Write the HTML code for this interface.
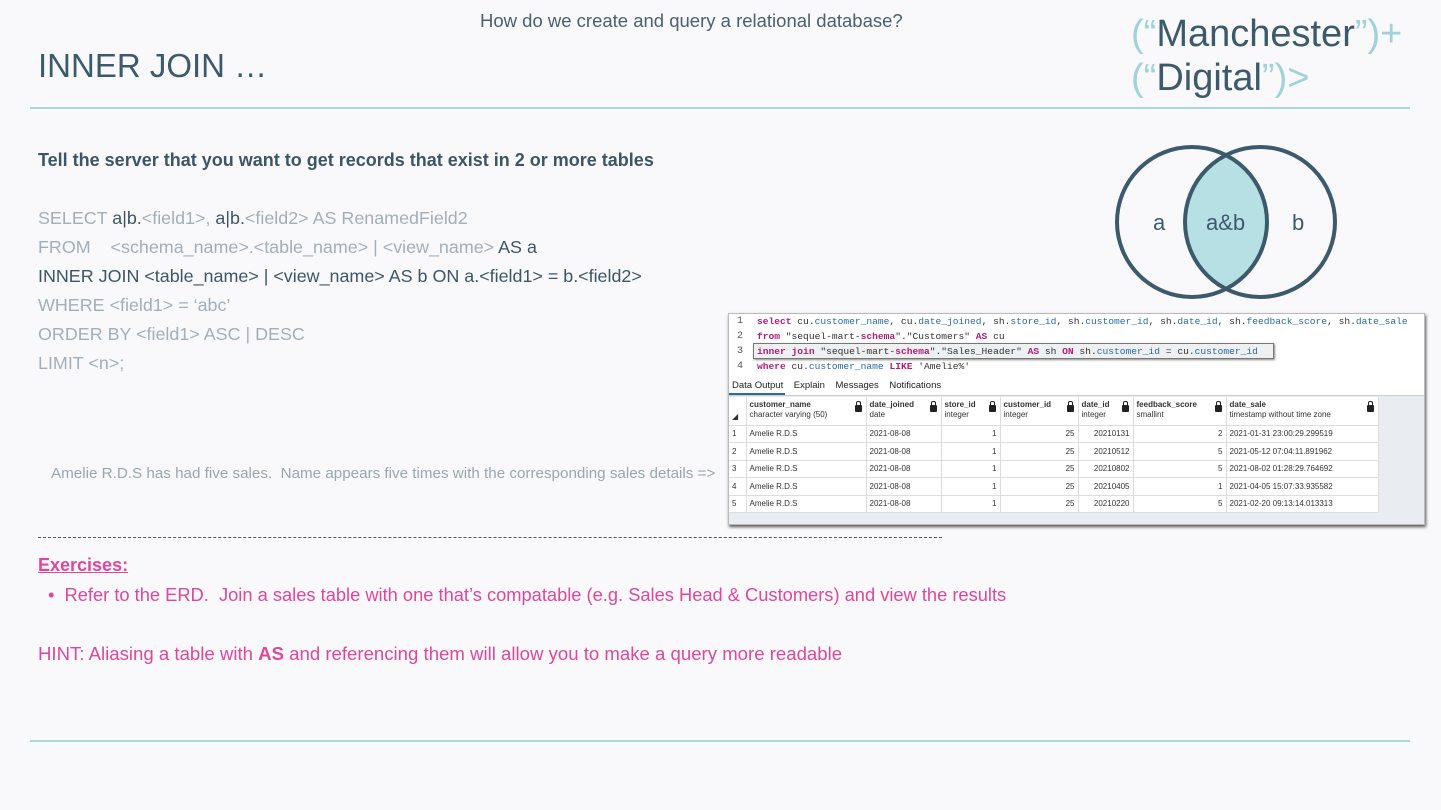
<!DOCTYPE html>
<html><head><meta charset="utf-8"><style>
*{margin:0;padding:0;box-sizing:border-box}
body{width:1441px;height:810px;background:#f9f9fb;font-family:"Liberation Sans",sans-serif;position:relative;overflow:hidden}
.a{position:absolute;white-space:nowrap}
.sql{font-size:17.9px;color:#a3afb8;left:38px}
.dk{color:#3d5566}
.code{font-family:"Liberation Mono",monospace;font-size:9.6px;color:#333;left:757px}
.kw{color:#b0207a;font-weight:bold}
.fn{color:#2a6aa8}
.ln{left:737px;font-family:"Liberation Mono",monospace;font-size:10px;color:#555}
table{border-collapse:collapse;font-size:8px;color:#333}
td{border-right:1px solid #ddd;border-bottom:1px solid #ddd;height:17.5px;padding:0 3px;background:#fff}
th{font-weight:normal;text-align:left;vertical-align:top;padding:3px 3px;border-right:1px solid #ddd;border-bottom:1px solid #ddd;height:28px;background:#fff;position:relative;line-height:10px}
th b{font-weight:bold}
.r{text-align:right}
.lock{position:absolute;right:4px;top:8px;width:7px;height:7px;background:#222;border-radius:1px}
.lock:before{content:"";position:absolute;left:1px;top:-4px;width:3px;height:4px;border:1px solid #222;border-bottom:none;border-radius:2px 2px 0 0}
</style></head><body>
<div class="a" style="left:480px;top:10px;font-size:18.5px;color:#4a6070">How do we create and query a relational database?</div>
<div class="a" style="left:38px;top:47px;font-size:33px;color:#3d5a6c">INNER JOIN …</div>
<div class="a" style="left:1131px;top:12px;font-size:38px;color:#3d5a6c;line-height:44px"><span style="color:#9fd3d8">(“</span>Manchester<span style="color:#9fd3d8">”)+</span><br><span style="color:#9fd3d8">(“</span>Digital<span style="color:#9fd3d8">”)&gt;</span></div>
<div class="a" style="left:30px;top:107px;width:1380px;height:2px;background:#a8d8dc"></div>
<div class="a" style="left:30px;top:740px;width:1380px;height:2px;background:#a8d8dc"></div>
<div class="a" style="left:38px;top:150px;font-size:18px;font-weight:bold;color:#3d5566">Tell the server that you want to get records that exist in 2 or more tables</div>
<div class="a sql" style="top:208px">SELECT <span class="dk">a|b.</span>&lt;field1&gt;, <span class="dk">a|b.</span>&lt;field2&gt; AS RenamedField2</div>
<div class="a sql" style="top:237px">FROM &nbsp;&nbsp;&nbsp;&lt;schema_name&gt;.&lt;table_name&gt; | &lt;view_name&gt; <span class="dk">AS a</span></div>
<div class="a sql dk" style="top:266px">INNER JOIN &lt;table_name&gt; | &lt;view_name&gt; AS b ON a.&lt;field1&gt; = b.&lt;field2&gt;</div>
<div class="a sql" style="top:295px">WHERE &lt;field1&gt; = ‘abc’</div>
<div class="a sql" style="top:324px">ORDER BY &lt;field1&gt; ASC | DESC</div>
<div class="a sql" style="top:353px">LIMIT &lt;n&gt;;</div>
<svg class="a" style="left:1115px;top:140px" width="230" height="165">
<path d="M111 15.2 A75 75 0 0 1 111 148.8 A75 75 0 0 1 111 15.2Z" fill="#b6e0e3"/>
<circle cx="77" cy="82" r="75" fill="none" stroke="#3d5a6c" stroke-width="4"/>
<circle cx="145" cy="82" r="75" fill="none" stroke="#3d5a6c" stroke-width="4"/>
<text x="38" y="90" font-size="22" fill="#3d5a6c" font-family="Liberation Sans">a</text>
<text x="91" y="90" font-size="22" fill="#3d5a6c" font-family="Liberation Sans">a&amp;b</text>
<text x="177" y="90" font-size="22" fill="#3d5a6c" font-family="Liberation Sans">b</text>
</svg>
<div class="a" style="left:728px;top:313px;width:697px;height:212px;background:#e9edf1;border:1px solid #bbb;box-shadow:1px 2px 3px #555"></div>
<div class="a" style="left:729px;top:314px;width:695px;height:60px;background:#fff"></div>
<div class="a ln" style="top:316px">1</div><div class="a ln" style="top:331px">2</div><div class="a ln" style="top:346px">3</div><div class="a ln" style="top:361px">4</div>
<div class="a code" style="top:316px"><span class="kw">select</span> cu.<span class="fn">customer_name</span>, cu.<span class="fn">date_joined</span>, sh.<span class="fn">store_id</span>, sh.<span class="fn">customer_id</span>, sh.<span class="fn">date_id</span>, sh.<span class="fn">feedback_score</span>, sh.<span class="fn">date_sale</span></div>
<div class="a code" style="top:331px"><span class="kw">from</span> "sequel-mart-<span class="kw">schema</span>"."Customers" <span class="kw">AS</span> cu</div>
<div class="a" style="left:753px;top:343px;width:521px;height:16px;border:1px solid #777;background:#eef0f2;box-shadow:1px 1px 2px #888"></div>
<div class="a code" style="top:346px"><span class="kw">inner join</span> "sequel-mart-<span class="kw">schema</span>"."Sales_Header" <span class="kw">AS</span> sh <span class="kw">ON</span> sh.<span class="fn">customer_id</span> = cu.<span class="fn">customer_id</span></div>
<div class="a code" style="top:361px"><span class="kw">where</span> cu.<span class="fn">customer_name</span> <span class="kw">LIKE</span> 'Amelie%'</div>
<div class="a" style="left:729px;top:374px;width:695px;height:22px;background:#fff;border-bottom:1px solid #ccc"></div>
<div class="a" style="left:732px;top:380px;font-size:9.5px;color:#222">Data Output &nbsp;&nbsp;&nbsp;Explain &nbsp;&nbsp;&nbsp;Messages &nbsp;&nbsp;&nbsp;Notifications</div>
<div class="a" style="left:729px;top:393px;width:56px;height:2px;background:#2a6aa8"></div>
<table class="a" style="left:729px;top:397px">
<tr><th style="width:17px;vertical-align:bottom">◢</th><th style="width:120px"><b>customer_name</b><br>character varying (50)<span class="lock"></span></th><th style="width:75px"><b>date_joined</b><br>date<span class="lock"></span></th><th style="width:59px"><b>store_id</b><br>integer<span class="lock"></span></th><th style="width:78px"><b>customer_id</b><br>integer<span class="lock"></span></th><th style="width:55px"><b>date_id</b><br>integer<span class="lock"></span></th><th style="width:93px"><b>feedback_score</b><br>smallint<span class="lock"></span></th><th style="width:152px"><b>date_sale</b><br>timestamp without time zone<span class="lock"></span></th></tr>
<tr><td>1</td><td>Amelie R.D.S</td><td>2021-08-08</td><td class="r">1</td><td class="r">25</td><td class="r">20210131</td><td class="r">2</td><td>2021-01-31 23:00:29.299519</td></tr>
<tr><td>2</td><td>Amelie R.D.S</td><td>2021-08-08</td><td class="r">1</td><td class="r">25</td><td class="r">20210512</td><td class="r">5</td><td>2021-05-12 07:04:11.891962</td></tr>
<tr><td>3</td><td>Amelie R.D.S</td><td>2021-08-08</td><td class="r">1</td><td class="r">25</td><td class="r">20210802</td><td class="r">5</td><td>2021-08-02 01:28:29.764692</td></tr>
<tr><td>4</td><td>Amelie R.D.S</td><td>2021-08-08</td><td class="r">1</td><td class="r">25</td><td class="r">20210405</td><td class="r">1</td><td>2021-04-05 15:07:33.935582</td></tr>
<tr><td>5</td><td>Amelie R.D.S</td><td>2021-08-08</td><td class="r">1</td><td class="r">25</td><td class="r">20210220</td><td class="r">5</td><td>2021-02-20 09:13:14.013313</td></tr>
</table>
<div class="a" style="left:51px;top:465px;font-size:15.2px;color:#9aa6ae">Amelie R.D.S has had five sales.&nbsp; Name appears five times with the corresponding sales details =&gt;</div>
<div class="a" style="left:38px;top:537px;width:904px;border-top:1px dashed #555"></div>
<div class="a" style="left:38px;top:555px;font-size:18px;font-weight:bold;color:#e0479a;text-decoration:underline">Exercises:</div>
<div class="a" style="left:48px;top:584px;font-size:18.3px;color:#e0479a">•&nbsp; Refer to the ERD.&nbsp; Join a sales table with one that’s compatable (e.g. Sales Head &amp; Customers) and view the results</div>
<div class="a" style="left:38px;top:643px;font-size:18.6px;color:#e0479a">HINT: Aliasing a table with <b>AS</b> and referencing them will allow you to make a query more readable</div>
</body></html>
